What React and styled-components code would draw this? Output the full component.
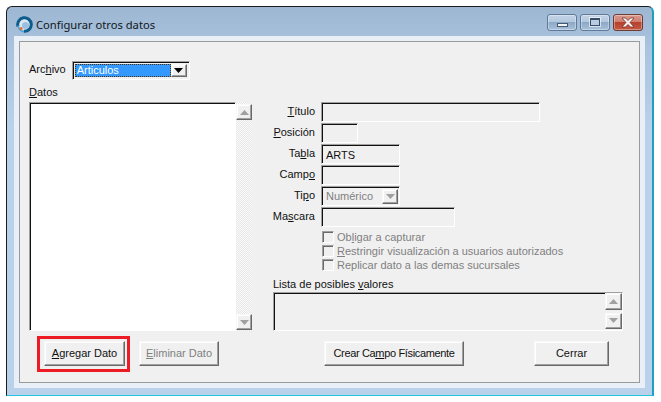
import React from "react";
import styled, { createGlobalStyle } from "styled-components";

const GlobalStyle = createGlobalStyle`
  html, body {
    margin: 0;
    padding: 0;
    background: #fff;
  }
  body {
    font-family: "Liberation Sans", Arial, sans-serif;
    font-size: 11px;
    color: #111;
  }
`;

const sunken = `
  border: 1px solid;
  border-color: #a0a0a0 #fff #fff #a0a0a0;
  box-shadow: inset 1px 1px 0 #111;
`;

const raised = `
  border: 1px solid;
  border-color: #f8f8f8 #696969 #696969 #f8f8f8;
  box-shadow: inset -1px -1px 0 #a0a0a0, inset 1px 1px 0 #fff;
`;

function Arrow({ down, color = "#a0a0a0" }) {
  return (
    <svg width="9" height="5" viewBox="0 0 9 5">
      <path d={down ? "M0 0h9L4.5 5z" : "M0 5h9L4.5 0z"} fill={color} />
    </svg>
  );
}

function Logo() {
  return (
    <svg width="17" height="17" viewBox="0 0 17 17">
      <circle cx="8.5" cy="8.5" r="5.5" fill="#dbe9f5" />
      <circle cx="9.5" cy="9.5" r="3.6" fill="#9cc0e0" />
      <path d="M2 10.5A6.8 6.8 0 1 1 8 15.3" fill="none" stroke="#0d5c8c" strokeWidth="3" />
      <path d="M2.2 9.5a6.5 6.5 0 0 0 5.8 6.2" fill="none" stroke="#4aa6dc" strokeWidth="1.6" />
      <circle cx="5" cy="12.5" r="1.5" fill="#ea6f2a" />
    </svg>
  );
}

function Label({ text, mark }) {
  const i = text.indexOf(mark);
  return (
    <>
      {text.slice(0, i)}
      <u>{mark}</u>
      {text.slice(i + mark.length)}
    </>
  );
}

const rows = [
  { text: "Título", mark: "T", width: 219 },
  { text: "Posición", mark: "P", width: 37 },
  { text: "Tabla", mark: "b", width: 79, value: "ARTS" },
  { text: "Campo", mark: "o", width: 79 },
  { text: "Tipo", mark: "p", width: 79, select: "Numérico" },
  { text: "Mascara", mark: "s", width: 134 },
];

const checks = [
  { text: "Obligar a capturar", mark: "l" },
  { text: "Restringir visualización a usuarios autorizados", mark: "R" },
  { text: "Replicar dato a las demas sucursales" },
];

export default function App() {
  return (
    <Page>
      <GlobalStyle />
      <Window>
        <TitleBar>
          <TitleIcon>
            <Logo />
          </TitleIcon>
          <Title>Configurar otros datos</Title>
          <Controls>
            <CtrlButton>
              <MinGlyph />
            </CtrlButton>
            <CtrlButton>
              <MaxGlyph />
            </CtrlButton>
            <CtrlButton $close>
              <svg width="14" height="11" viewBox="0 0 14 11">
                <path
                  d="M1 1h3.5L7 3.5 9.5 1H13L9 5.5l4 4.5H9.5L7 7.5 4.5 10H1l4-4.5z"
                  fill="#f4f0f0"
                  stroke="#6d2a22"
                  strokeWidth="0.7"
                />
              </svg>
            </CtrlButton>
          </Controls>
        </TitleBar>
        <Frame>
          <Client>
            <FileRow>
              <FileLabel>
                Arc<u>h</u>ivo
              </FileLabel>
              <FileSelect>
                <FileValue>
                  <span>Articulos</span>
                </FileValue>
                <DropButton>
                  <Arrow down color="#000" />
                </DropButton>
              </FileSelect>
            </FileRow>
            <Main>
              <LeftColumn>
                <DataLabel>
                  <u>D</u>atos
                </DataLabel>
                <ListWrap>
                  <ListBox />
                  <ScrollTrack>
                    <ScrollButton>
                      <Arrow />
                    </ScrollButton>
                    <ScrollButton>
                      <Arrow down />
                    </ScrollButton>
                  </ScrollTrack>
                </ListWrap>
              </LeftColumn>
              <RightColumn>
                <FormGrid>
                  {rows.map((r) => (
                    <React.Fragment key={r.text}>
                      <FieldLabel>
                        <Label text={r.text} mark={r.mark} />
                      </FieldLabel>
                      {r.select ? (
                        <Field $width={r.width}>
                          <SelectText>{r.select}</SelectText>
                          <SmallDrop>
                            <Arrow down />
                          </SmallDrop>
                        </Field>
                      ) : (
                        <Field $width={r.width}>
                          <span>{r.value}</span>
                        </Field>
                      )}
                    </React.Fragment>
                  ))}
                </FormGrid>
                <CheckList>
                  {checks.map((c) => (
                    <CheckRow key={c.text}>
                      <CheckBox />
                      <span>{c.mark ? <Label text={c.text} mark={c.mark} /> : c.text}</span>
                    </CheckRow>
                  ))}
                </CheckList>
                <ValuesLabel>
                  Lista de posibles <u>v</u>alores
                </ValuesLabel>
                <ValuesBox>
                  <ValuesScroll>
                    <ValuesButton>
                      <Arrow />
                    </ValuesButton>
                    <ValuesButton>
                      <Arrow down />
                    </ValuesButton>
                  </ValuesScroll>
                </ValuesBox>
              </RightColumn>
            </Main>
            <ButtonRow>
              <PushButton $width={81} $marked>
                <u>A</u>gregar Dato
              </PushButton>
              <PushButton $width={80} $gap={14} disabled>
                <u>E</u>liminar Dato
              </PushButton>
              <PushButton $width={140} $gap={105} $tight>
                Crear Ca<u>m</u>po Físicamente
              </PushButton>
              <PushButton $width={75} $gap={70}>
                Cerrar
              </PushButton>
            </ButtonRow>
          </Client>
        </Frame>
      </Window>
    </Page>
  );
}

const Page = styled.div`
  width: 661px;
  height: 402px;
  padding: 6px 7px 6px 6px;
  box-sizing: border-box;
  overflow: hidden;
`;

const Window = styled.div`
  width: 648px;
  height: 390px;
  box-sizing: border-box;
  display: flex;
  flex-direction: column;
  border: 1px solid #1b1b1b;
  border-bottom-color: #25c4e0;
  border-right: 2px solid #1f9fbf;
  border-radius: 6px 6px 0 0;
  background: linear-gradient(180deg, #9db6d2 0, #a9c2de 40px, #b9d1ea 120px, #b9d1ea 100%);
`;

const TitleBar = styled.div`
  height: 29px;
  flex: none;
  display: flex;
  align-items: center;
  padding: 0 9px;
`;

const TitleIcon = styled.div`
  width: 17px;
  height: 17px;
  margin-top: 6px;
  display: flex;
`;

const Title = styled.div`
  margin: 5px 0 0 3px;
  font-family: "Noto Sans", sans-serif;
  font-size: 11.2px;
  color: #101820;
`;

const Controls = styled.div`
  margin-left: auto;
  margin-top: 1px;
  display: flex;
  gap: 3px;
`;

const CtrlButton = styled.div`
  width: 30px;
  height: 17px;
  box-sizing: border-box;
  display: flex;
  align-items: center;
  justify-content: center;
  border: 1px solid ${(p) => (p.$close ? "#6e3a34" : "#5f7a98")};
  border-radius: 3px;
  box-shadow: inset 0 0 0 1px rgba(255, 255, 255, 0.35);
  background: ${(p) =>
    p.$close
      ? "linear-gradient(180deg, #d99a8e 0, #cf7f70 45%, #b8402c 50%, #c45a44 100%)"
      : "linear-gradient(180deg, #c3d3e6 0, #b3c8df 45%, #8ca9c8 50%, #a9c1da 100%)"};
`;

const MinGlyph = styled.div`
  width: 9px;
  height: 2px;
  margin-top: 6px;
  border: 1px solid #445870;
  background: #f2f5f8;
`;

const MaxGlyph = styled.div`
  width: 8px;
  height: 5px;
  border: 1px solid #3a4c62;
  border-top-width: 2px;
  background: #b9cbe0;
  box-shadow: 0 0 0 1px rgba(255, 255, 255, 0.6);
`;

const Frame = styled.div`
  flex: 1;
  min-height: 0;
  padding: 5px 0 0 12px;
  display: flex;
  flex-direction: column;
`;

const Client = styled.div`
  flex: none;
  width: 621px;
  height: 342px;
  box-sizing: border-box;
  display: flex;
  flex-direction: column;
  padding: 19px 0 0 9px;
  background: #f0f0f0;
  border: 1px solid #9a9a9a;
  outline: 5px solid #e9eff6;
`;

const FileRow = styled.div`
  height: 19px;
  display: flex;
  align-items: center;
  gap: 6px;
`;

const FileLabel = styled.span`
  margin-top: -3px;
`;

const FileSelect = styled.div`
  width: 118px;
  height: 19px;
  box-sizing: border-box;
  display: flex;
  padding: 2px;
  ${sunken}
`;

const FileValue = styled.div`
  flex: 1;
  background: #3399ff;
  color: #fff;
  outline: 1px dotted #5a3000;
  outline-offset: -1px;
  display: flex;
  align-items: center;
  padding: 0 0 1px 2px;
`;

const DropButton = styled.div`
  width: 16px;
  box-sizing: border-box;
  display: flex;
  align-items: center;
  justify-content: center;
  background: #f0f0f0;
  ${raised}
`;

const Main = styled.div`
  display: flex;
  margin-top: 6px;
  height: 245px;
`;

const LeftColumn = styled.div`
  width: 223px;
  flex: none;
  display: flex;
  flex-direction: column;
`;

const DataLabel = styled.div`
  height: 16px;
  line-height: 12px;
`;

const ListWrap = styled.div`
  flex: 1;
  display: flex;
  min-height: 0;
`;

const ListBox = styled.div`
  width: 207px;
  box-sizing: border-box;
  background: #fff;
  ${sunken}
`;

const ScrollTrack = styled.div`
  flex: 1;
  display: flex;
  flex-direction: column;
  justify-content: space-between;
  padding: 2px 0 1px;
  background-color: #f6f6f6;
  background-image: conic-gradient(#e6e6e6 25%, #fbfbfb 0 50%, #e6e6e6 0 75%, #fbfbfb 0);
  background-size: 2px 2px;
`;

const ScrollButton = styled.div`
  height: 16px;
  box-sizing: border-box;
  display: flex;
  align-items: center;
  justify-content: center;
  background: #f0f0f0;
  ${raised}
`;

const RightColumn = styled.div`
  flex: 1;
  margin-left: 21px;
  display: flex;
  flex-direction: column;
  padding-top: 16px;
`;

const FormGrid = styled.div`
  display: grid;
  grid-template-columns: 42px auto;
  grid-auto-rows: 21px;
  column-gap: 6px;
  justify-items: start;
`;

const FieldLabel = styled.div`
  justify-self: end;
  line-height: 18px;
  white-space: nowrap;
`;

const Field = styled.div`
  width: ${(p) => p.$width}px;
  height: 20px;
  box-sizing: border-box;
  display: flex;
  align-items: center;
  padding: 1px 1px 0 4px;
  background: #f0f0f0;
  ${sunken}
`;

const SelectText = styled.span`
  flex: 1;
  margin-top: -1px;
  color: #808080;
`;

const SmallDrop = styled.div`
  width: 16px;
  height: 15px;
  box-sizing: border-box;
  display: flex;
  align-items: center;
  justify-content: center;
  ${raised}
`;

const CheckList = styled.div`
  margin: 3px 0 0 49px;
  display: flex;
  flex-direction: column;
  gap: 2px;
  color: #808080;
`;

const CheckRow = styled.div`
  height: 12px;
  display: flex;
  align-items: center;
  gap: 3px;
`;

const CheckBox = styled.div`
  width: 12px;
  height: 12px;
  box-sizing: border-box;
  background: #f0f0f0;
  ${sunken}
  box-shadow: inset 1px 1px 0 #696969;
`;

const ValuesLabel = styled.div`
  margin-top: 6px;
  line-height: 14px;
`;

const ValuesBox = styled.div`
  width: 350px;
  height: 40px;
  margin-top: 1px;
  box-sizing: border-box;
  display: flex;
  justify-content: flex-end;
  padding: 0 0 1px;
  ${sunken}
`;

const ValuesScroll = styled.div`
  width: 17px;
  display: flex;
  flex-direction: column;
  gap: 3px;
`;

const ValuesButton = styled.div`
  flex: 1;
  display: flex;
  align-items: center;
  justify-content: center;
  ${raised}
`;

const ButtonRow = styled.div`
  display: flex;
  margin: 10px 0 0 15px;
`;

const PushButton = styled.button`
  position: relative;
  width: ${(p) => p.$width}px;
  height: 25px;
  margin: 0 0 0 ${(p) => p.$gap || 0}px;
  padding: 0 0 2px;
  font: 11px "Liberation Sans", Arial, sans-serif;
  letter-spacing: ${(p) => (p.$tight ? "-0.35px" : "0")};
  color: #111;
  background: #f0f0f0;
  ${raised}

  &:disabled {
    color: #808080;
  }

  &::after {
    content: "";
    display: ${(p) => (p.$marked ? "block" : "none")};
    position: absolute;
    inset: -6px -6px -7px -8px;
    border: 3px solid #ed1c24;
  }
`;
